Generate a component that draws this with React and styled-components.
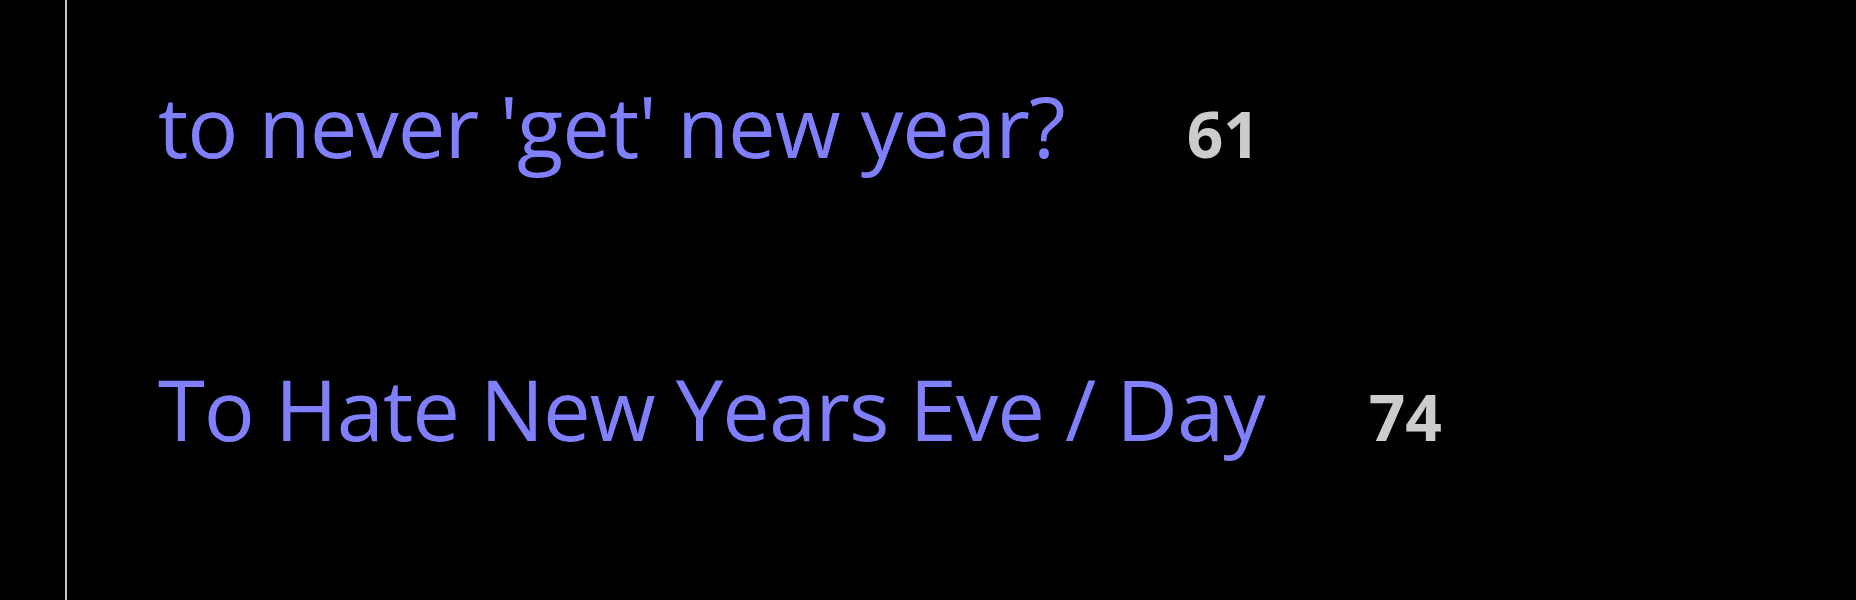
import React from "react";
import styled, { createGlobalStyle } from "styled-components";

const GlobalStyle = createGlobalStyle`
  html, body {
    margin: 0;
    padding: 0;
    background: #000;
  }
  body {
    font-family: "Open Sans", "Noto Sans", "Liberation Sans", sans-serif;
  }
`;

const Page = styled.div`
  box-sizing: border-box;
  height: 100vh;
  margin-left: 65px;
  border-left: 2px solid #c8c8c8;
  padding: 67px 0 0 91px;
`;

const TopicList = styled.ul`
  list-style: none;
  margin: 0;
  padding: 0;
  display: flex;
  flex-direction: column;
  gap: 167px;
`;

const TopicRow = styled.li`
  display: flex;
  align-items: baseline;
  height: 116px;
  line-height: 116px;
`;

const TopicTitle = styled.a`
  font-size: 85px;
  letter-spacing: -1px;
  color: #8080ff;
  text-decoration: none;
  white-space: nowrap;
`;

const ReplyCount = styled.span`
  margin-left: ${(p) => p.$gap}px;
  font-size: 64px;
  line-height: 1;
  font-weight: 700;
  color: #cccccc;
`;

const topics = [
  { title: "to never 'get' new year?", replies: 61, gap: 122 },
  { title: "To Hate New Years Eve / Day", replies: 74, gap: 104 },
];

export default function App() {
  return (
    <>
      <GlobalStyle />
      <Page>
        <TopicList>
          {topics.map((t) => (
            <TopicRow key={t.title}>
              <TopicTitle href="#">{t.title}</TopicTitle>
              <ReplyCount $gap={t.gap}>{t.replies}</ReplyCount>
            </TopicRow>
          ))}
        </TopicList>
      </Page>
    </>
  );
}
